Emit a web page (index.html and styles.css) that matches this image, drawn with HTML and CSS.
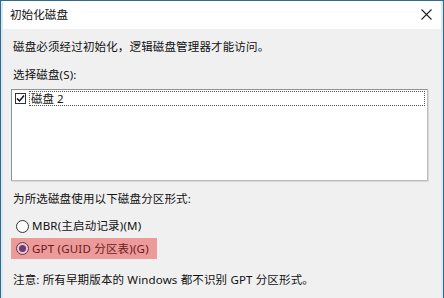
FILE: index.html
```html
<!DOCTYPE html>
<html lang="zh-CN">
<head>
<meta charset="utf-8">
<link rel="stylesheet" href="styles.css">
</head>
<body>
<div class="window">
  <div class="titlebar">
    <span class="title">初始化磁盘</span>
    <svg class="close" width="11" height="11" viewBox="0 0 11 11"><path d="M0.5 0.5 L10.5 10.5 M10.5 0.5 L0.5 10.5" stroke="#222" stroke-width="1.1" fill="none"/></svg>
  </div>
  <div class="body">
    <p class="line intro">磁盘必须经过初始化，逻辑磁盘管理器才能访问。</p>
    <p class="line label">选择磁盘(S):</p>
    <div class="listbox">
      <div class="item">
        <span class="check"><svg width="9" height="9" viewBox="0 0 9 9"><path d="M1 4.5 L3.5 7 L8 1.5" stroke="#111" stroke-width="1.5" fill="none"/></svg></span>
        <span class="item-text">磁盘 2</span>
      </div>
    </div>
    <p class="line label2">为所选磁盘使用以下磁盘分区形式:</p>
    <div class="radio-row mbr"><span class="radio"></span><span>MBR(主启动记录)(M)</span></div>
    <div class="radio-row gpt"><span class="radio on"></span><span>GPT (GUID 分区表)(G)</span></div>
    <p class="line note">注意: 所有早期版本的 Windows 都不识别 GPT 分区形式。</p>
  </div>
</div>
</body>
</html>
```
FILE: styles.css
```css
html, body {
  margin: 0;
  padding: 0;
  width: 444px;
  height: 298px;
  overflow: hidden;
  background: #f0f0f0;
}
body {
  font-family: "Noto Sans", "Noto Sans CJK SC", sans-serif;
  font-size: 11.5px;
  color: #111;
}
.window {
  box-sizing: border-box;
  width: 444px;
  height: 298px;
  border-left: 1px solid #2f6b8c;
  border-right: 1px solid #2f6b8c;
  border-top: 1px solid #2f6b8c;
  display: flex;
  flex-direction: column;
}
.titlebar {
  height: 28px;
  background: #fff;
  display: flex;
  align-items: center;
  justify-content: space-between;
  padding: 0 9px 0 7px;
  border-left: 2px solid #dbe8f2;
  border-right: 2px solid #dbe8f2;
}
.title {
  font-size: 11.6px;
  line-height: 14px;
  margin-top: -1px;
}
.close {
  margin-top: -1px;
}
.body {
  flex: 1;
  background: #f0f0f0;
  border-left: 2px solid #dbe8f2;
  border-right: 2px solid #dbe8f2;
  padding: 0 13px 0 8px;
  display: flex;
  flex-direction: column;
}
.line {
  margin: 0;
  line-height: 14px;
  padding-left: 2px;
  letter-spacing: 0.15px;
}
.intro { margin-top: 11px; }
.label { margin-top: 14px; }
.listbox {
  margin-top: 7px;
  height: 89px;
  background: #fff;
  border: 1px solid #8e9297;
  border-right-color: #b9bbbf;
  border-bottom-color: #b9bbbf;
  box-shadow: 1px 1px 0 #dadada;
  padding: 1px 2px 0 2px;
}
.item {
  display: flex;
  align-items: center;
  height: 15px;
}
.check {
  width: 9px;
  height: 9px;
  border: 1px solid #333;
  background: #fff;
  display: flex;
  align-items: center;
  justify-content: center;
  margin-left: 1px;
}
.item-text {
  flex: 1;
  margin-left: 3px;
  height: 13px;
  line-height: 13px;
  border: 1px dotted #555;
  padding-left: 1px;
}
.label2 { margin-top: 11px; }
.radio-row {
  display: flex;
  align-items: center;
  gap: 3px;
  line-height: 14px;
  letter-spacing: 0.2px;
}
.mbr {
  margin-top: 13px;
  padding-left: 5px;
}
.gpt {
  margin-top: 5px;
  width: 141px;
  height: 21px;
  padding-left: 5px;
  background: #ec9a9a;
  color: #6a1a1a;
}
.radio {
  box-sizing: border-box;
  width: 13px;
  height: 13px;
  border-radius: 50%;
  border: 1px solid #333;
  background: #fff;
  display: flex;
  align-items: center;
  justify-content: center;
}
.gpt .radio {
  border-color: #5a3a4a;
  background: #f4c4c4;
}
.radio.on::after {
  content: "";
  width: 7px;
  height: 7px;
  border-radius: 50%;
  background: #6b3a78;
}
.note { margin-top: 14px; }
```
